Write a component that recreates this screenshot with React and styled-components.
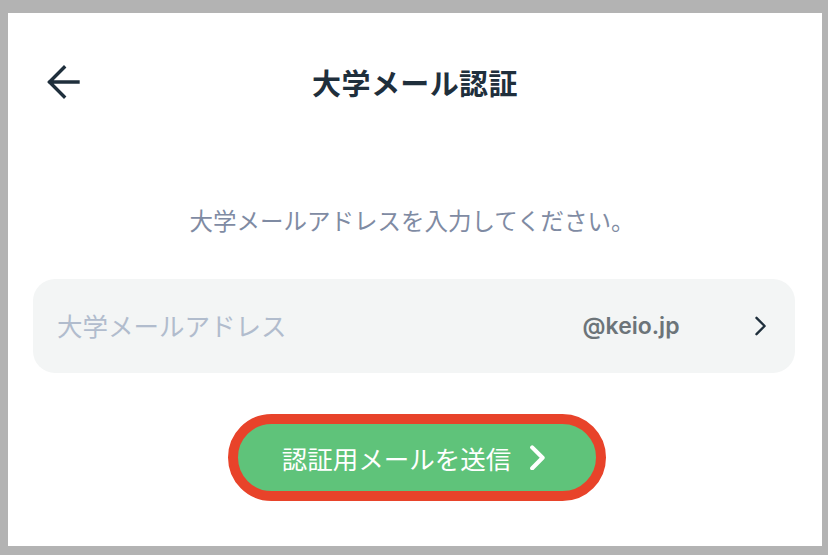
import styled, { createGlobalStyle } from "styled-components";

const GlobalStyle = createGlobalStyle`
  html, body {
    margin: 0;
    padding: 0;
    background: #b3b3b3;
  }
  body {
    font-family: "Noto Sans CJK JP", "Noto Sans", sans-serif;
  }
`;

const Frame = styled.div`
  width: 828px;
  height: 555px;
  box-sizing: border-box;
  padding: 13px 6px 9px 8px;
`;

const Card = styled.main`
  height: 100%;
  background: #ffffff;
  display: flex;
  flex-direction: column;
  align-items: stretch;
  padding-top: 45px;
  box-sizing: border-box;
`;

const Header = styled.header`
  height: 48px;
  display: grid;
  grid-template-columns: 80px 1fr 80px;
  align-items: center;
`;

const BackButton = styled.button`
  border: none;
  background: none;
  padding: 0;
  margin-left: 39px;
  width: 34px;
  height: 34px;
  display: flex;
  align-items: center;
  justify-content: center;
  cursor: pointer;
`;

const Title = styled.h1`
  margin: 0;
  text-align: center;
  font-size: 29px;
  font-weight: 700;
  color: #1f2f3c;
  letter-spacing: 0.4px;
`;

const Lead = styled.p`
  margin: 97px 0 0;
  padding-right: 6px;
  text-align: center;
  font-size: 23.5px;
  line-height: 34px;
  color: #7f8ba3;
`;

const Field = styled.label`
  margin: 42px 27px 0 25px;
  height: 94px;
  border-radius: 22px;
  background: #f3f5f5;
  display: flex;
  align-items: center;
  padding: 0 29px 0 24px;
  box-sizing: border-box;
`;

const Input = styled.input`
  flex: 1;
  min-width: 0;
  border: none;
  background: transparent;
  outline: none;
  font-family: inherit;
  font-size: 25.5px;
  color: #1f2f3c;
  padding: 0 0 3px;
  &::placeholder {
    color: #b1bccd;
  }
`;

const Domain = styled.span`
  font-family: "Inter", "Noto Sans", sans-serif;
  font-size: 23px;
  font-weight: 600;
  color: #6c7479;
  margin-right: 74px;
`;

const SubmitRow = styled.div`
  display: flex;
  justify-content: center;
  margin-top: 41px;
  padding-left: 3px;
`;

const Submit = styled.button`
  width: 378px;
  height: 87px;
  border-radius: 44px;
  border: 10px solid #e8432a;
  background: #5fc37a;
  color: #ffffff;
  font-family: inherit;
  font-size: 25.5px;
  display: flex;
  align-items: center;
  justify-content: center;
  gap: 18px;
  padding: 0 6px 0 0;
  box-sizing: border-box;
  cursor: pointer;
`;

const ArrowLeft = () => (
  <svg width="34" height="34" viewBox="0 0 34 34" fill="none">
    <path
      d="M31 17H3M17 2.5L2.5 17L17 31.5"
      stroke="#1f2f3c"
      strokeWidth="3.4"
      strokeLinecap="square"
    />
  </svg>
);

const Chevron = ({ color, size, weight }) => (
  <svg width={size} height={size * 1.6} viewBox="0 0 10 16" fill="none">
    <path
      d="M2 1.5L8.5 8L2 14.5"
      stroke={color}
      strokeWidth={weight}
      strokeLinecap="round"
      strokeLinejoin="round"
    />
  </svg>
);

export default function App() {
  return (
    <Frame>
      <GlobalStyle />
      <Card>
        <Header>
          <BackButton aria-label="戻る">
            <ArrowLeft />
          </BackButton>
          <Title>大学メール認証</Title>
          <span />
        </Header>
        <Lead>大学メールアドレスを入力してください。</Lead>
        <Field>
          <Input placeholder="大学メールアドレス" />
          <Domain>@keio.jp</Domain>
          <Chevron color="#1f2f3c" size={12.5} weight={1.9} />
        </Field>
        <SubmitRow>
          <Submit>
            認証用メールを送信
            <Chevron color="#ffffff" size={16} weight={2.6} />
          </Submit>
        </SubmitRow>
      </Card>
    </Frame>
  );
}
